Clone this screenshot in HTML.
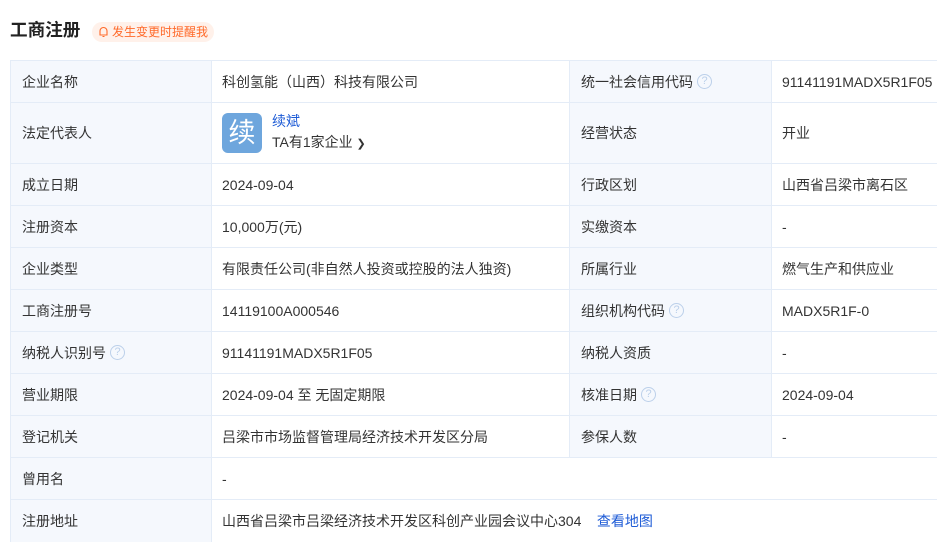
<!DOCTYPE html>
<html><head><meta charset="utf-8"><style>
html,body{margin:0;padding:0;background:#fff;width:937px;height:541px;overflow:hidden;font-family:"Liberation Sans","Noto Sans CJK SC",sans-serif;color:#333;}
.title{position:absolute;left:10px;top:18px;font-size:17.6px;font-weight:bold;color:#222;line-height:24px;}
.badge{position:absolute;left:92px;top:22px;height:20px;width:122px;border-radius:10px;background:#fff1ea;color:#ff6a2a;font-size:12px;line-height:20px;box-sizing:border-box;padding-left:20px;}
.badge svg{position:absolute;left:6px;top:4px;}
.row{position:absolute;left:10px;width:1000px;display:flex;border-top:1px solid #e4ecf7;box-sizing:border-box;font-size:14px;}
.c{box-sizing:border-box;border-left:1px solid #e4ecf7;height:100%;display:flex;align-items:center;white-space:nowrap;color:#333;}
.c1{width:201px;padding-left:11px;background:#f5f8fd;}
.c2{width:358px;padding-left:10px;}
.c3{width:202px;padding-left:11px;background:#f5f8fd;}
.c4{width:239px;padding-left:10px;}
.cw{width:799px;padding-left:10px;}
.q{display:inline-block;width:15px;height:15px;border:1px solid #bcd0ea;border-radius:50%;color:#bcd0ea;font-size:11px;line-height:13px;text-align:center;margin-left:4px;box-sizing:border-box;}
a{color:#1d5bd6;text-decoration:none;}
.av{display:inline-block;width:40px;height:40px;border-radius:6px;background:#6ea6dd;color:#fff;font-size:27px;line-height:40px;text-align:center;}
</style></head><body>
<div class="title">工商注册</div>
<div class="badge"><svg width="11" height="12" viewBox="0 0 11 12"><path d="M2 9V5a3.5 3.5 0 0 1 7 0v4H1.5h8M4.5 10.5h2" fill="none" stroke="#ff6a2a" stroke-width="1.1"/></svg>发生变更时提醒我</div>

<div class="row" style="top:60px;height:42px"><div class="c c1">企业名称</div><div class="c c2">科创氢能（山西）科技有限公司</div><div class="c c3">统一社会信用代码<span class="q">?</span></div><div class="c c4">91141191MADX5R1F05</div></div>
<div class="row" style="top:102px;height:61px"><div class="c c1">法定代表人</div><div class="c c2"><span class="av">续</span><div style="margin-left:10px;line-height:21px"><a>续斌</a><br>TA有1家企业 <span style="font-size:11px">&#10095;</span></div></div><div class="c c3">经营状态</div><div class="c c4">开业</div></div>
<div class="row" style="top:163px;height:42px"><div class="c c1">成立日期</div><div class="c c2">2024-09-04</div><div class="c c3">行政区划</div><div class="c c4">山西省吕梁市离石区</div></div>
<div class="row" style="top:205px;height:42px"><div class="c c1">注册资本</div><div class="c c2">10,000万(元)</div><div class="c c3">实缴资本</div><div class="c c4">-</div></div>
<div class="row" style="top:247px;height:42px"><div class="c c1">企业类型</div><div class="c c2">有限责任公司(非自然人投资或控股的法人独资)</div><div class="c c3">所属行业</div><div class="c c4">燃气生产和供应业</div></div>
<div class="row" style="top:289px;height:42px"><div class="c c1">工商注册号</div><div class="c c2">14119100A000546</div><div class="c c3">组织机构代码<span class="q">?</span></div><div class="c c4">MADX5R1F-0</div></div>
<div class="row" style="top:331px;height:42px"><div class="c c1">纳税人识别号<span class="q">?</span></div><div class="c c2">91141191MADX5R1F05</div><div class="c c3">纳税人资质</div><div class="c c4">-</div></div>
<div class="row" style="top:373px;height:42px"><div class="c c1">营业期限</div><div class="c c2">2024-09-04 至 无固定期限</div><div class="c c3">核准日期<span class="q">?</span></div><div class="c c4">2024-09-04</div></div>
<div class="row" style="top:415px;height:42px"><div class="c c1">登记机关</div><div class="c c2">吕梁市市场监督管理局经济技术开发区分局</div><div class="c c3">参保人数</div><div class="c c4">-</div></div>
<div class="row" style="top:457px;height:42px"><div class="c c1">曾用名</div><div class="c cw">-</div></div>
<div class="row" style="top:499px;height:60px"><div class="c c1" style="height:42px">注册地址</div><div class="c cw" style="height:42px">山西省吕梁市吕梁经济技术开发区科创产业园会议中心304&nbsp;&nbsp;&nbsp;&nbsp;<a>查看地图</a></div></div>
</body></html>
